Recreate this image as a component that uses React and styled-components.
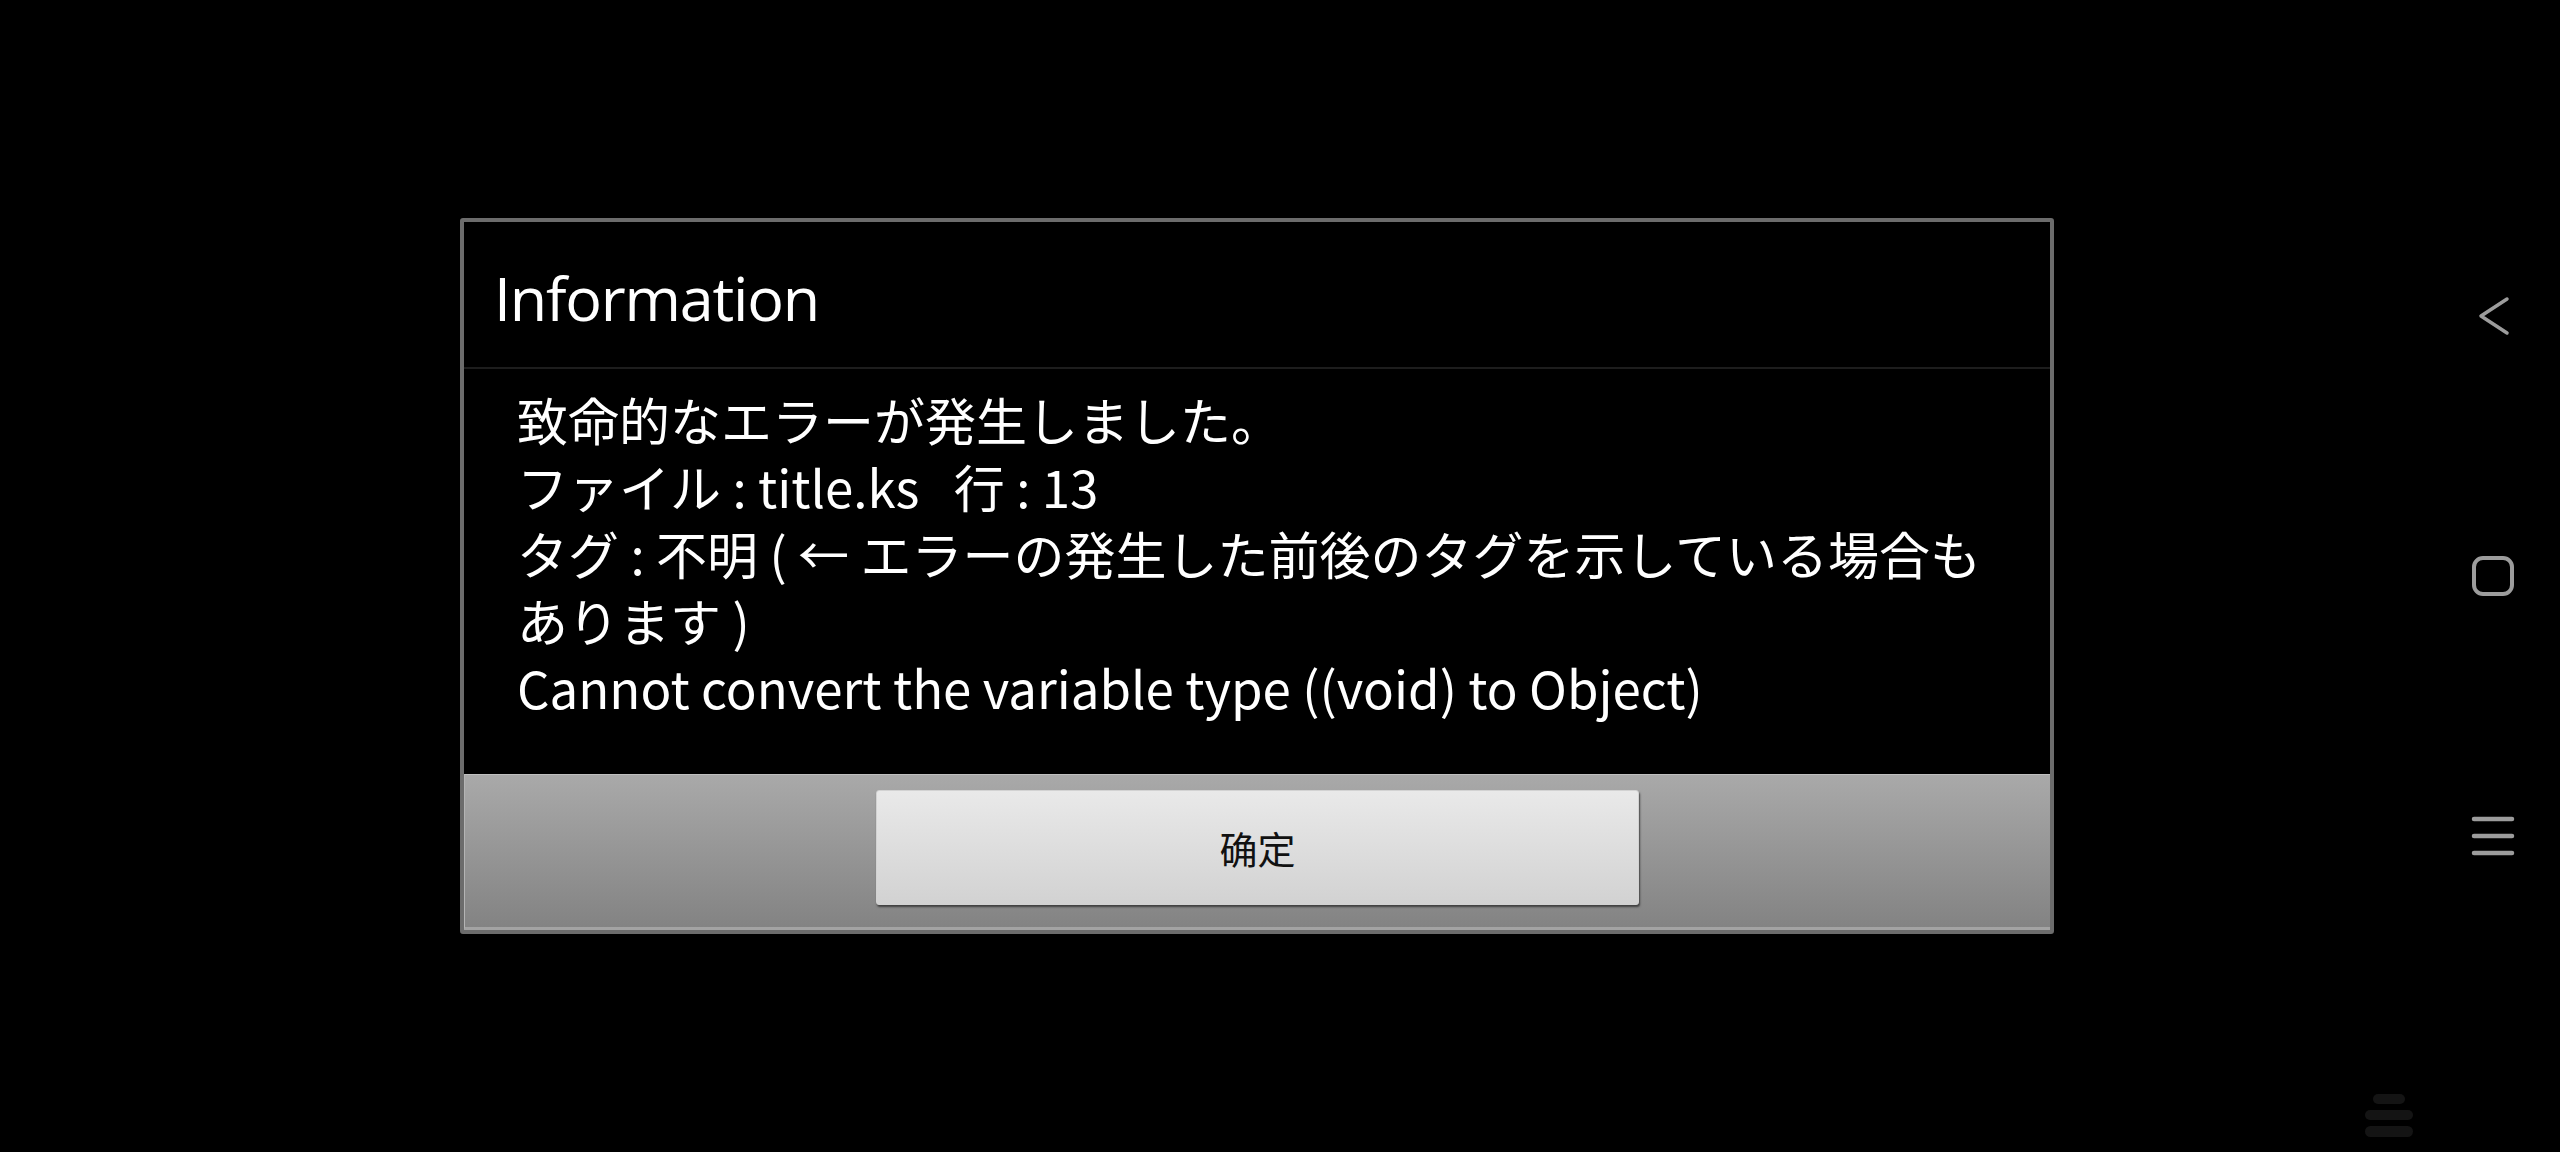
import React from "react";
import styled, { createGlobalStyle } from "styled-components";

const GlobalStyle = createGlobalStyle`
  html, body {
    margin: 0;
    padding: 0;
    background: #000;
  }
  #root {
    height: 100vh;
  }
`;

const Screen = styled.div`
  position: relative;
  display: flex;
  width: 2560px;
  height: 1152px;
  background: #000;
  overflow: hidden;
`;

const Stage = styled.main`
  flex: 1;
  display: flex;
  align-items: center;
  padding-left: 460px;
`;

const Dialog = styled.section`
  width: 1594px;
  box-sizing: border-box;
  border: 4px solid #6c6c6c;
  border-radius: 3px;
  background: #000;
  display: flex;
  flex-direction: column;
`;

const Header = styled.header`
  height: 145px;
  display: flex;
  align-items: center;
  padding-left: 30px;
  border-bottom: 2px solid #1d1d1d;
`;

const Title = styled.h1`
  margin: 0;
  margin-top: 6px;
  font-family: "Open Sans", "Noto Sans CJK JP", sans-serif;
  font-weight: 400;
  font-size: 61px;
  letter-spacing: -1.2px;
  color: #fff;
`;

const Body = styled.div`
  padding: 17px 45px 53px 53px;
  font-family: "Noto Sans CJK JP", sans-serif;
  font-size: 51px;
  line-height: 67px;
  color: #fff;
  white-space: pre-wrap;
`;

const Line = styled.div``;

const Footer = styled.footer`
  height: 156px;
  box-sizing: border-box;
  display: flex;
  justify-content: center;
  align-items: flex-start;
  padding-top: 15px;
  background: linear-gradient(#a9a9a9, #838383);
  border-top: 1px solid #c0c0c0;
  border-left: 1px solid #b4b4b4;
  border-bottom: 3px solid #a3a3a3;
`;

const OkButton = styled.button`
  width: 763px;
  height: 115px;
  border: 1px solid #d2d2d2;
  border-radius: 3px;
  background: linear-gradient(#e9e9e9, #d2d2d2);
  box-shadow: 1px 2px 2px rgba(40, 40, 40, 0.75);
  font-family: "Noto Sans CJK SC", sans-serif;
  font-size: 38px;
  color: #111;
  cursor: pointer;
`;

const Rail = styled.nav`
  width: 134px;
  display: flex;
  flex-direction: column;
  align-items: center;
  justify-content: center;
  gap: 220px;
`;

const RailIcon = styled.svg`
  width: 44px;
  height: 40px;
  display: block;
  stroke: #9c9c9c;
  fill: none;
  stroke-linecap: round;
  stroke-linejoin: round;
`;

const FloatBadge = styled.svg`
  position: absolute;
  left: 2362px;
  top: 1088px;
  width: 56px;
  height: 56px;
  fill: #141414;
`;

export default function App() {
  return (
    <>
      <GlobalStyle />
      <Screen>
        <Stage>
          <Dialog>
            <Header>
              <Title>Information</Title>
            </Header>
            <Body>
              <Line>致命的なエラーが発生しました。</Line>
              <Line>ファイル : title.ks   行 : 13</Line>
              <Line>
                タグ : 不明 ( ← エラーの発生した前後のタグを示している場合もあります )
              </Line>
              <Line>Cannot convert the variable type ((void) to Object)</Line>
            </Body>
            <Footer>
              <OkButton>确定</OkButton>
            </Footer>
          </Dialog>
        </Stage>
        <Rail>
          <RailIcon viewBox="0 0 44 40" strokeWidth="3.5">
            <polyline points="36,3 10,20 36,37" />
          </RailIcon>
          <RailIcon viewBox="0 0 44 40" strokeWidth="4">
            <rect x="3" y="2" width="38" height="36" rx="9" />
          </RailIcon>
          <RailIcon viewBox="0 0 44 40" strokeWidth="4.5">
            <line x1="3" y1="3" x2="41" y2="3" />
            <line x1="3" y1="20" x2="41" y2="20" />
            <line x1="3" y1="37" x2="41" y2="37" />
          </RailIcon>
        </Rail>
        <FloatBadge viewBox="0 0 56 56">
          <rect x="11" y="6" width="32" height="10" rx="5" />
          <rect x="3" y="22" width="48" height="10" rx="5" />
          <rect x="3" y="38" width="48" height="11" rx="5.5" />
        </FloatBadge>
      </Screen>
    </>
  );
}
